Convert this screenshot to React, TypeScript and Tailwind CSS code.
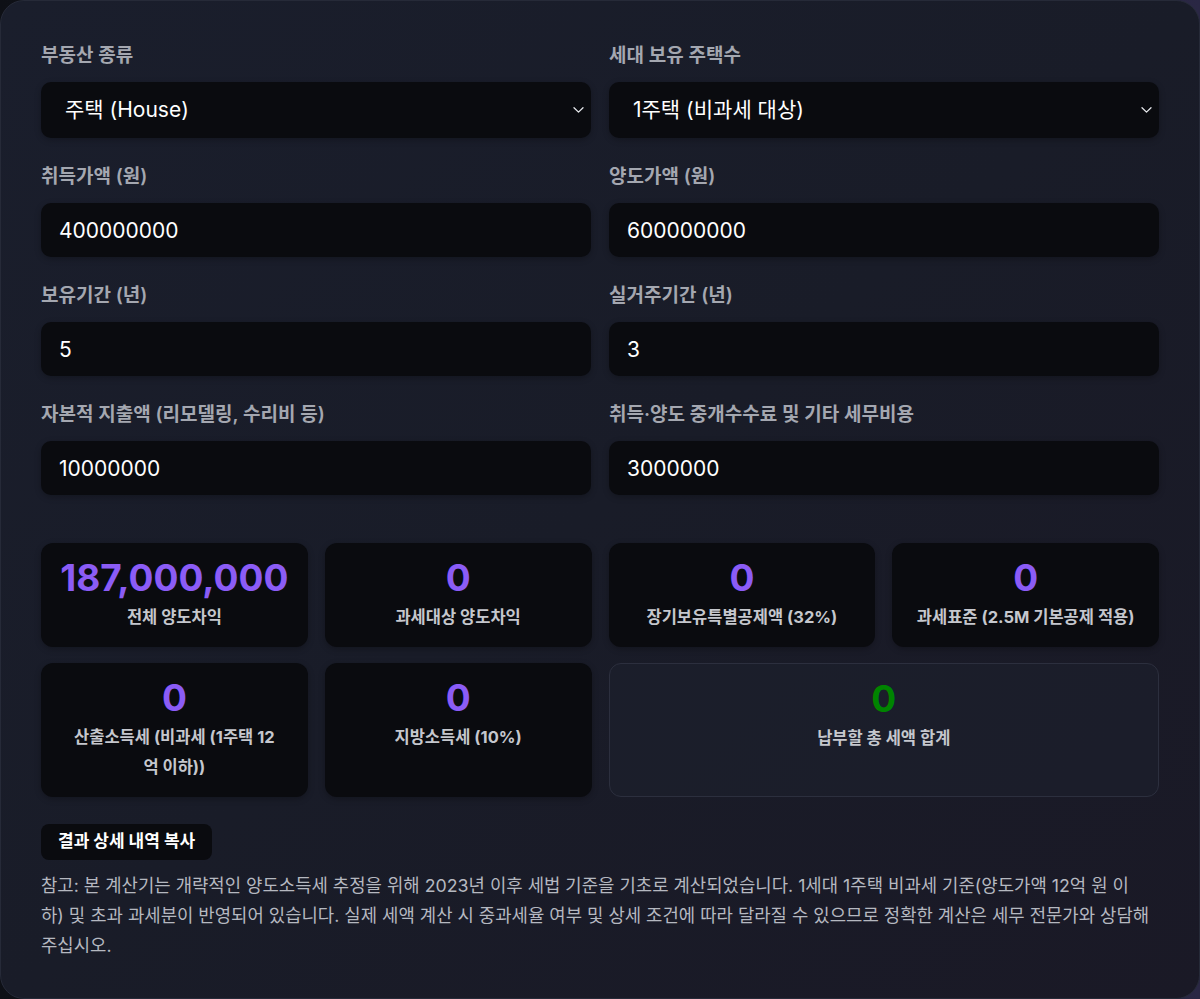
import { ChangeEvent, useState } from "react"

type Stat = {
  value: string
  label: string
  tone?: "violet" | "green"
  wide?: boolean
}

const propertyTypes = ["주택 (House)", "토지 (Land)", "상가 (Commercial)"]
const houseCounts = ["1주택 (비과세 대상)", "2주택", "3주택 이상"]

function Label({ children }: { children: React.ReactNode }) {
  return (
    <label className="mb-[11px] block text-[19px] leading-[30px] font-semibold text-[#a4a7b0]">
      {children}
    </label>
  )
}

function SelectField({ label, options }: { label: string; options: string[] }) {
  const [value, setValue] = useState(options[0])
  return (
    <div className="flex flex-col">
      <Label>{label}</Label>
      <div className="relative">
        <select
          value={value}
          onChange={(e: ChangeEvent<HTMLSelectElement>) => setValue(e.target.value)}
          className="h-14 w-full appearance-none rounded-[10px] bg-[#0a0b0f] pl-6 pr-10 text-[21px] text-white outline-none shadow-[0_2px_6px_rgba(0,0,0,0.25)]"
        >
          {options.map((o) => (
            <option key={o} value={o}>
              {o}
            </option>
          ))}
        </select>
        <svg
          className="pointer-events-none absolute right-[7px] top-1/2 -translate-y-1/2"
          width="11"
          height="7"
          viewBox="0 0 11 7"
          fill="none"
        >
          <path d="M1 1.2 5.5 5.6 10 1.2" stroke="#e5e7eb" strokeWidth="1.3" strokeLinecap="round" strokeLinejoin="round" />
        </svg>
      </div>
    </div>
  )
}

function NumberField({ label, initial }: { label: string; initial: string }) {
  return (
    <div className="flex flex-col">
      <Label>{label}</Label>
      <input
        type="text"
        defaultValue={initial}
        className="h-[54px] w-full rounded-[10px] bg-[#0a0b0f] px-[18px] text-[21px] text-white outline-none shadow-[0_2px_6px_rgba(0,0,0,0.25)]"
      />
    </div>
  )
}

function StatCard({ stat }: { stat: Stat }) {
  const base = "flex flex-col items-center rounded-xl px-4 pt-[15px] pb-[15px] text-center"
  const box = stat.wide
    ? "col-span-2 border border-[#2c2f3e] bg-[#1c1f2c]/70"
    : "bg-[#0a0b0f] shadow-[0_2px_6px_rgba(0,0,0,0.25)]"
  const color = stat.tone === "green" ? "text-[#008400]" : "text-[#8b5cf6]"
  return (
    <div className={`${base} ${box}`}>
      <div className={`text-[37px] leading-10 font-bold ${color}`}>{stat.value}</div>
      <div className="mt-1 whitespace-pre-line text-[16.5px] leading-[30px] font-bold text-[#c5c7cd]">{stat.label}</div>
    </div>
  )
}

export default function App() {
  const stats: Stat[] = [
    { value: "187,000,000", label: "전체 양도차익" },
    { value: "0", label: "과세대상 양도차익" },
    { value: "0", label: "장기보유특별공제액 (32%)" },
    { value: "0", label: "과세표준 (2.5M 기본공제 적용)" },
    { value: "0", label: "산출소득세 (비과세 (1주택 12\n억 이하))" },
    { value: "0", label: "지방소득세 (10%)" },
    { value: "0", label: "납부할 총 세액 합계", tone: "green", wide: true },
  ]

  return (
    <div className="min-h-screen w-full bg-gradient-to-r from-[#0e1016] via-[#1a1c2a] to-[#2a2744] font-['Inter','Noto_Sans_CJK_KR',sans-serif]">
      <div className="rounded-3xl border border-[#262a38] bg-gradient-to-br from-[#1a1e2c] via-[#191c28] to-[#1a1926] px-10 pt-10 pb-[37px]">
        {/* input fields */}
        <div className="grid grid-cols-2 gap-x-[18px] gap-y-6">
          <SelectField label="부동산 종류" options={propertyTypes} />
          <SelectField label="세대 보유 주택수" options={houseCounts} />
          <NumberField label="취득가액 (원)" initial="400000000" />
          <NumberField label="양도가액 (원)" initial="600000000" />
          <NumberField label="보유기간 (년)" initial="5" />
          <NumberField label="실거주기간 (년)" initial="3" />
          <NumberField label="자본적 지출액 (리모델링, 수리비 등)" initial="10000000" />
          <NumberField label="취득·양도 중개수수료 및 기타 세무비용" initial="3000000" />
        </div>

        {/* results */}
        <div className="mt-12 grid grid-cols-4 gap-x-[17px] gap-y-4">
          {stats.map((s) => (
            <StatCard key={s.label} stat={s} />
          ))}
        </div>

        <button className="mt-[27px] h-9 rounded-lg bg-[#0a0b0f] px-[17px] text-[17px] font-bold text-white">
          결과 상세 내역 복사
        </button>

        <p className="mt-[11px] text-[17.8px] leading-[30px] text-[#b5b8c0]">
          참고: 본 계산기는 개략적인 양도소득세 추정을 위해 2023년 이후 세법 기준을 기초로 계산되었습니다. 1세대 1주택 비과세 기준(양도가액 12억 원 이
          <br />
          하) 및 초과 과세분이 반영되어 있습니다. 실제 세액 계산 시 중과세율 여부 및 상세 조건에 따라 달라질 수 있으므로 정확한 계산은 세무 전문가와 상담해
          <br />
          주십시오.
        </p>
      </div>
    </div>
  )
}
